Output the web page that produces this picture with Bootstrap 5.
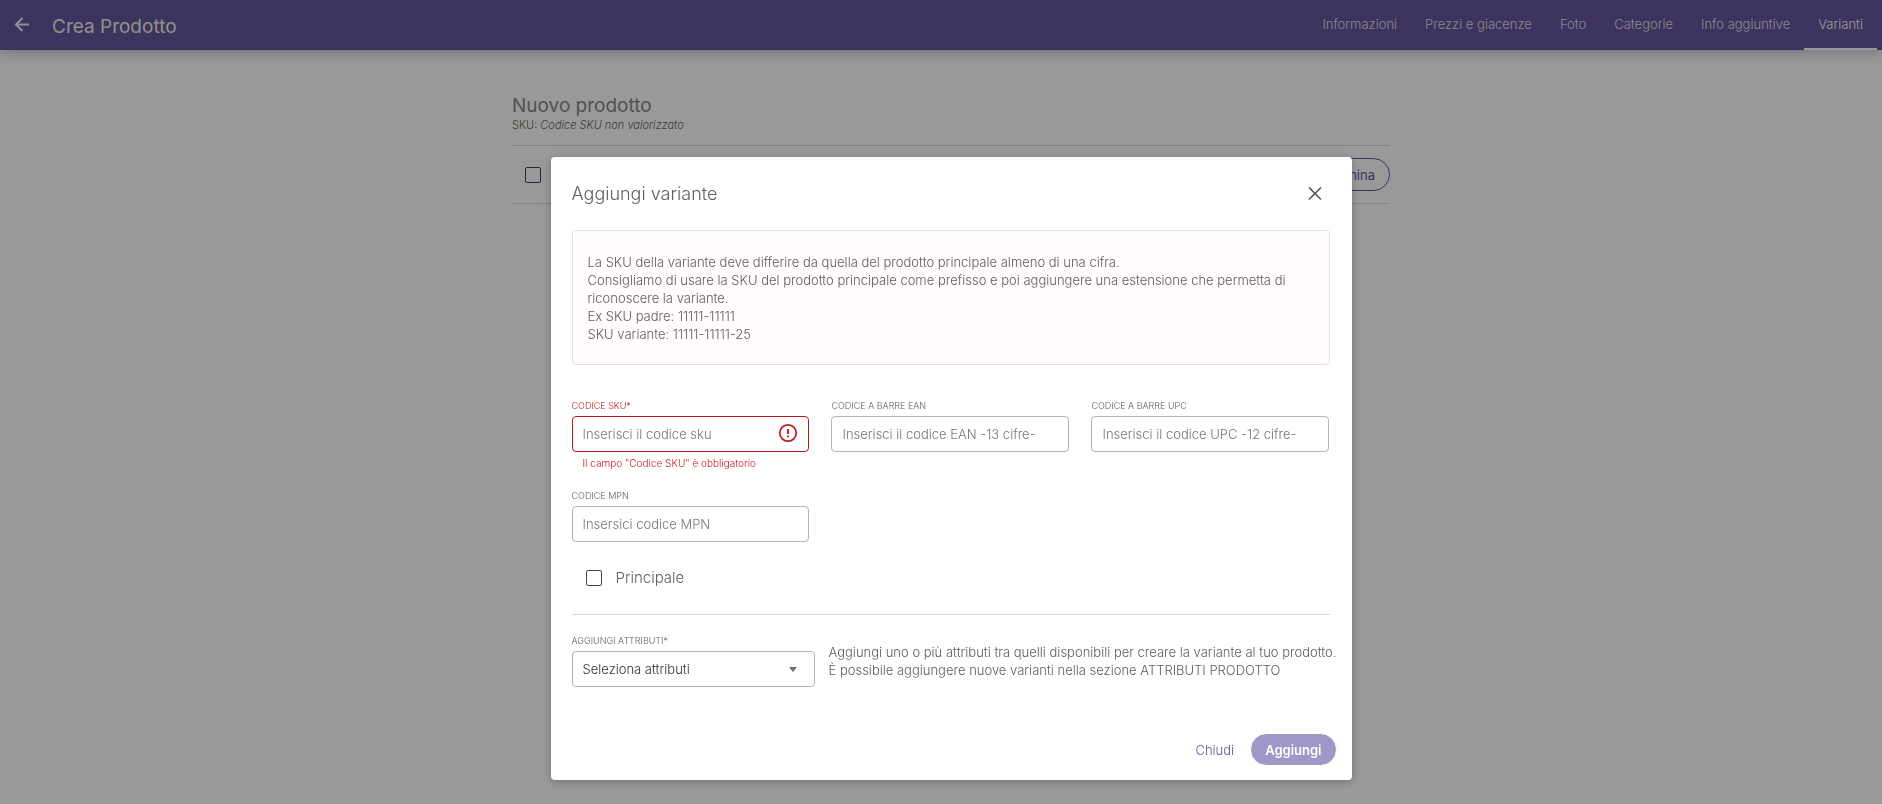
<!DOCTYPE html>
<html lang="it">
<head>
<meta charset="utf-8">
<meta name="viewport" content="width=device-width, initial-scale=1">
<title>Crea Prodotto</title>
<link href="https://cdn.jsdelivr.net/npm/bootstrap@5.3.0/dist/css/bootstrap.min.css" rel="stylesheet">
<style>
  :root { --brand: #65559d; --ink: #606060; --danger: #c2181f; --page-shift: 20px; }
  body { font-family: Inter, "Open Sans", sans-serif; font-size: 13px; line-height: 18px; color: var(--ink); background: #fff; }
  .topbar { background: var(--brand); height: 50px; padding: 0 5px 0 12px; box-shadow: 0 3px 12px rgba(70, 50, 120, .3); }
  .topbar .back { color: #fff; opacity: .9; margin-right: 20px; }
  .topbar .navbar-brand { font-size: 19px; line-height: 24px; font-weight: 400; color: #f0f0ea; padding: 3px 0 0; margin: 0; }
  .topbar .navbar-nav .nav-link { font-size: 13px; line-height: 18px; font-weight: 300; color: #e4e0ee; padding: 15px 14px; border-bottom: 2px solid transparent; height: 50px; }
  .topbar .navbar-nav .nav-link.active { color: #fff; border-color: #fff; }
  .page { padding-left: var(--page-shift); }
  .page-inner { max-width: 878px; margin: 44px auto 0; }
  .page-title { font-size: 19px; line-height: 24px; font-weight: 400; color: #888; margin: 0; }
  .sku-line { font-size: 11px; line-height: 14px; font-weight: 300; margin: 0; color: #666; }
  .sku-line span { color: #666a30; }
  .bulk-bar { border-top: 1px solid #dcdcdc; border-bottom: 1px solid #dcdcdc; margin-top: 13px; height: 59px; padding-left: 13px; }
  .pill { font-size: 13px; line-height: 18px; border-radius: 17px; padding: 6px 14px; height: 33px; border: 1px solid transparent; }
  .pill-outline { color: var(--brand); border-color: var(--brand); background: none; }
  .pill-text { color: var(--brand); font-weight: 300; }
  .pill-fill { --bs-btn-disabled-bg: #a197c6; --bs-btn-disabled-color: #fff; --bs-btn-disabled-opacity: 1; font-weight: 600; }
  .form-check-input.tick { width: 16px; height: 16px; border: 1px solid #45405e; border-radius: 2px; margin: 0; background-color: transparent; }
  .modal-backdrop { --bs-backdrop-opacity: .4; }
  .modal { padding-left: var(--page-shift); }
  .modal-dialog { max-width: 801px; margin: 157px auto 24px; }
  .modal-content { border: 0; border-radius: 4px; box-shadow: 0 2px 8px rgba(0, 0, 0, .25); }
  .modal-header { padding: 25px 22px 24px 21px; border: 0; }
  .modal-title { font-size: 18px; line-height: 24px; font-weight: 300; }
  .close-x { width: 30px; height: 24px; color: #555; }
  .modal-body { padding: 0 22px 0 21px; font-weight: 300; }
  .note { background: #fffbff; border: 1px solid #e7ddf0; border-radius: 4px; padding: 22px 15px 21px; }
  .fields { --bs-gutter-x: 22px; row-gap: 20px; margin-top: 35px; }
  .field-label { display: block; font-size: 9px; line-height: 12px; text-transform: uppercase; margin-bottom: 4px; }
  .form-control.box, .form-select.box { font: inherit; font-size: 13px; line-height: 18px; height: 36px; padding: 8px 10px; border: 1px solid #b5b5b5; border-radius: 4px; color: #333; }
  .form-control.box::placeholder { color: #777; opacity: 1; }
  .form-control.box.bad { border-color: #b9151c; padding-right: 40px; }
  .warn-icon { position: absolute; right: 11px; top: 7px; color: var(--danger); pointer-events: none; }
  .hint-bad { font-size: 10px; line-height: 14px; margin: 4px 0 0 11px; }
  .text-bad { color: var(--danger); }
  .main-check { font-size: 15px; line-height: 20px; gap: 14px; margin: 26px 0 0 14px; }
  .rule { border: 0; border-top: 1px solid #dadada; opacity: 1; margin: 26px 0 20px; }
  .attr-row { gap: 14px; }
  .attr-col { flex: 0 0 243px; }
  .form-select.box { background-image: url("data:image/svg+xml,%3Csvg xmlns='http://www.w3.org/2000/svg' viewBox='0 0 8 5'%3E%3Cpath fill='%23707070' d='M1 0h6q1 0 .4.8L4.5 4.6q-.5.5-1 0L.6.8Q0 0 1 0z'/%3E%3C/svg%3E"); background-size: 8px 5px; background-position: right 17px center; }
  .modal-footer { border: 0; padding: 46px 15px 14px; gap: 1px; }
  .modal-footer > * { margin: 0; }
</style>
</head>
<body>
<header class="navbar navbar-expand topbar flex-nowrap">
  <a class="back d-flex" href="#" aria-label="Indietro">
    <svg width="20" height="20" viewBox="0 0 20 20" fill="none" stroke="currentColor" stroke-width="2"><path d="M17 9.500H4.500M10.500 3L4 9.500L10.500 16"/></svg>
  </a>
  <a class="navbar-brand" href="#">Crea Prodotto</a>
  <nav class="navbar-nav ms-auto">
    <a class="nav-link" href="#">Informazioni</a>
    <a class="nav-link" href="#">Prezzi e giacenze</a>
    <a class="nav-link" href="#">Foto</a>
    <a class="nav-link" href="#">Categorie</a>
    <a class="nav-link" href="#">Info aggiuntive</a>
    <a class="nav-link active" aria-current="page" href="#">Varianti</a>
  </nav>
</header>

<main class="page">
  <div class="page-inner">
    <h1 class="page-title">Nuovo prodotto</h1>
    <p class="sku-line"><span>SKU:</span> <em>Codice SKU non valorizzato</em></p>
    <div class="bulk-bar d-flex align-items-center justify-content-between">
      <input class="form-check-input tick" type="checkbox" aria-label="Seleziona tutto">
      <button class="btn pill pill-outline" type="button">Elimina</button>
    </div>
  </div>
</main>

<div class="modal-backdrop show"></div>
<div class="modal show d-block" tabindex="-1" role="dialog" aria-modal="true" aria-labelledby="variantTitle">
  <div class="modal-dialog">
    <form class="modal-content">
      <div class="modal-header d-flex justify-content-between">
        <h2 class="modal-title" id="variantTitle">Aggiungi variante</h2>
        <button class="btn close-x border-0 p-0 d-flex align-items-center justify-content-center" type="button" aria-label="Chiudi finestra">
          <svg width="14" height="14" viewBox="0 0 14 14" fill="none" stroke="currentColor" stroke-width="1.600"><path d="M1 .5L13 12.500M13 .5L1 12.500"/></svg>
        </button>
      </div>
      <div class="modal-body">
        <div class="note">
          La SKU della variante deve differire da quella del prodotto principale almeno di una cifra.<br>
          Consigliamo di usare la SKU del prodotto principale come prefisso e poi aggiungere una estensione che permetta di riconoscere la variante.<br>
          Ex SKU padre: 11111-11111<br>
          SKU variante: 11111-11111-25
        </div>
        <div class="row fields">
          <div class="col-4">
            <label class="field-label text-bad" for="sku">Codice SKU*</label>
            <div class="position-relative">
              <input class="form-control box bad" id="sku" type="text" placeholder="Inserisci il codice sku" aria-describedby="skuError">
              <svg class="warn-icon" width="20" height="20" viewBox="0 0 20 20" fill="none" stroke="currentColor" stroke-width="1.800"><circle cx="10" cy="10" r="8.200"/><path d="M10 6V11M10 12.500V14.300"/></svg>
            </div>
            <p class="hint-bad text-bad" id="skuError">Il campo "Codice SKU" è obbligatorio</p>
          </div>
          <div class="col-4">
            <label class="field-label" for="ean">Codice a barre EAN</label>
            <input class="form-control box" id="ean" type="text" placeholder="Inserisci il codice EAN -13 cifre-">
          </div>
          <div class="col-4">
            <label class="field-label" for="upc">Codice a barre UPC</label>
            <input class="form-control box" id="upc" type="text" placeholder="Inserisci il codice UPC -12 cifre-">
          </div>
          <div class="col-4">
            <label class="field-label" for="mpn">Codice MPN</label>
            <input class="form-control box" id="mpn" type="text" placeholder="Insersici codice MPN">
          </div>
        </div>
        <div class="main-check d-flex align-items-center">
          <input class="form-check-input tick" type="checkbox" id="mainVariant">
          <label for="mainVariant">Principale</label>
        </div>
        <hr class="rule">
        <div class="attr-row d-flex align-items-center">
          <div class="attr-col">
            <label class="field-label" for="attrs">Aggiungi attributi*</label>
            <select class="form-select box" id="attrs"><option>Seleziona attributi</option></select>
          </div>
          <p class="mb-0 text-nowrap">Aggiungi uno o più attributi tra quelli disponibili per creare la variante al tuo prodotto.<br>È possibile aggiungere nuove varianti nella sezione ATTRIBUTI PRODOTTO</p>
        </div>
      </div>
      <div class="modal-footer">
        <button class="btn pill pill-text" type="button">Chiudi</button>
        <button class="btn pill pill-fill" type="submit" disabled>Aggiungi</button>
      </div>
    </form>
  </div>
</div>
<script src="https://cdn.jsdelivr.net/npm/bootstrap@5.3.0/dist/js/bootstrap.bundle.min.js"></script>
</body>
</html>
